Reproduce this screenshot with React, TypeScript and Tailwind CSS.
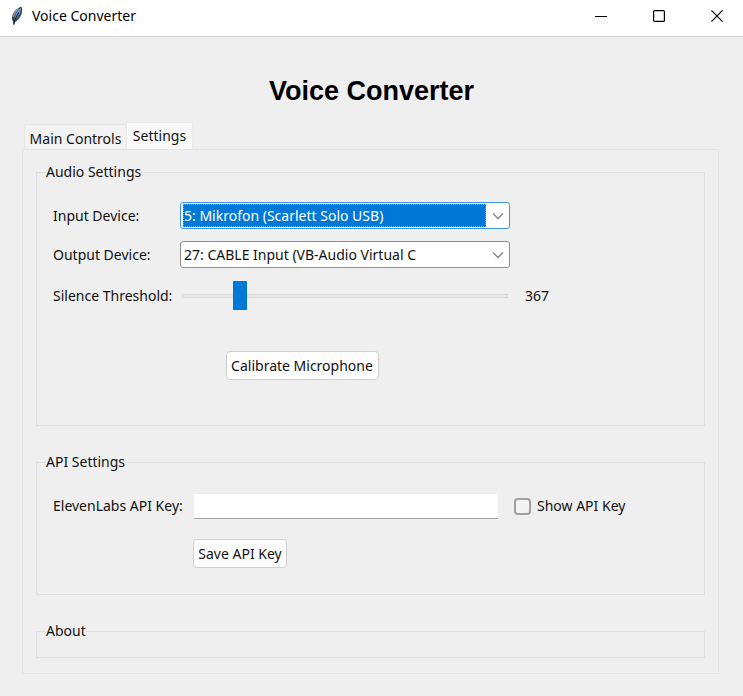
import { useState } from "react";
import type { ReactNode } from "react";

function FeatherIcon() {
  return (
    <svg width="14" height="20" viewBox="0 0 14 20" aria-hidden="true">
      <path d="M11.500.8C8 1.500 4.500 4.500 2.600 9c-.9 2.500-.8 4.800.3 6.500l.7 3.500 1-2.700C8 14.500 10.800 11 11.800 7c.5-2.500.5-4.800-.3-6.200z" fill="#3a434f" />
      <path d="M10.700 2C8.500 3 6.300 6 5.300 9.500c-.5 1.800-.7 3.200-.6 4.500 2.600-1.700 4.700-4.500 5.600-7.700.5-1.700.6-3.200.4-4.300z" fill="#5b97dc" />
      <path d="M8.800 6.500C7 9 5 12.500 3.700 18.500" stroke="#1b2330" strokeWidth="1.200" fill="none" />
      <path d="M8.500 2.800C6 4.600 4.200 7.500 3.500 11" stroke="#9ba8b5" strokeWidth="1.200" fill="none" />
    </svg>
  );
}

function TitleBar() {
  const button = "flex h-8 w-[58px] items-center justify-center pl-[5px]";
  return (
    <header className="flex h-[37px] items-start border-b border-[#d6d6d6] bg-white pl-[10px]">
      <div className="flex h-8 flex-1 items-center gap-2">
        <FeatherIcon />
        <span className="leading-5 text-black">Voice Converter</span>
      </div>
      <button type="button" aria-label="Minimize" className={button}>
        <svg width="12" height="12" viewBox="0 0 12 12" aria-hidden="true">
          <path d="M0 6.500h12" stroke="#000" />
        </svg>
      </button>
      <button type="button" aria-label="Maximize" className={button}>
        <svg width="12" height="12" viewBox="0 0 12 12" fill="none" aria-hidden="true">
          <rect x=".6" y=".6" width="10.800" height="10.800" rx="1" stroke="#000" strokeWidth="1.200" />
        </svg>
      </button>
      <button type="button" aria-label="Close" className={button}>
        <svg width="12" height="12" viewBox="0 0 12 12" aria-hidden="true">
          <path d="M.4.4l11.200 11.200M11.600.4L.4 11.600" stroke="#000" strokeWidth="1.200" />
        </svg>
      </button>
    </header>
  );
}

function Group({ title, className, children }: { title: string; className: string; children?: ReactNode }) {
  return (
    <fieldset className={`min-w-0 border border-[#dfdfdf] ${className}`}>
      <legend className="ml-[9px] h-5 leading-5">{title}</legend>
      {children}
    </fieldset>
  );
}

function Combo({ id, options, active }: { id: string; options: string[]; active?: boolean }) {
  const frame = active ? "border-[#3d97e0]" : "border-[#8f8f8f]";
  const field = active
    ? "border-dotted border-[#d98a4a] bg-[#0078d7] text-white"
    : "border-transparent bg-white text-[#111]";
  return (
    <div className={`flex h-[27px] items-center rounded-[3px] border bg-white py-px pr-px pl-[2px] ${frame}`}>
      <select id={id} className={`h-[23px] min-w-0 flex-1 appearance-none border leading-5 outline-none ${field}`}>
        {options.map((option) => (
          <option key={option}>{option}</option>
        ))}
      </select>
      <svg className="mr-1 ml-[6px]" width="12" height="12" viewBox="0 0 12 12" fill="none" aria-hidden="true">
        <path d="M1 3.500l5 5 5-5" stroke="#858585" strokeWidth="1.400" />
      </svg>
    </div>
  );
}

function PushButton({ className, children }: { className: string; children: ReactNode }) {
  return (
    <button
      type="button"
      className={`flex h-[29px] items-center justify-center rounded-[4px] border border-[#d0d0d0] bg-[#fdfdfd] leading-5 whitespace-nowrap ${className}`}
    >
      {children}
    </button>
  );
}

export default function App() {
  const [threshold, setThreshold] = useState(367);
  const [apiKey, setApiKey] = useState("");
  const [showKey, setShowKey] = useState(false);

  return (
    <div className="min-h-screen bg-[#efefef] font-['Noto_Sans','Open_Sans',sans-serif] text-[14px] text-[#111]">
      <TitleBar />
      <main className="px-[22px] pt-[38px] pb-[22px]">
        <h1 className="text-center font-['Liberation_Sans',Arial,sans-serif] text-[27px] leading-8 font-bold text-black">
          Voice Converter
        </h1>
        <div role="tablist" className="mt-[15px] flex items-end pl-[2px]">
          <button
            type="button"
            role="tab"
            aria-selected="false"
            className="h-[25px] w-[102px] border border-r-0 border-b-0 border-[#e6e6e6] bg-[#f2f2f2] pt-[3px] leading-5 whitespace-nowrap"
          >
            Main Controls
          </button>
          <button
            type="button"
            role="tab"
            aria-selected="true"
            className="h-[27px] w-[67px] border border-b-0 border-[#e9e9e9] bg-[#f9f9f9] leading-5"
          >
            Settings
          </button>
        </div>
        <section role="tabpanel" className="mr-[2px] flex flex-col gap-[26px] border border-[#e5e5e5] px-[13px] pt-3 pb-[15px]">
          <Group title="Audio Settings" className="h-[264px]">
            <div className="mt-5 ml-4 grid w-fit grid-cols-[127px_330px_41px] gap-y-3">
              <label htmlFor="input-device" className="self-center leading-5">Input Device:</label>
              <Combo id="input-device" options={["5: Mikrofon (Scarlett Solo USB)"]} active />
              <span />
              <label htmlFor="output-device" className="self-center leading-5">Output Device:</label>
              <Combo id="output-device" options={["27: CABLE Input (VB-Audio Virtual C"]} />
              <span />
              <label htmlFor="threshold" className="self-center leading-5 whitespace-nowrap">Silence Threshold:</label>
              <input
                id="threshold"
                type="range"
                min={50}
                max={2000}
                value={threshold}
                onChange={(e) => setThreshold(Number(e.target.value))}
                className="mx-[2px] h-[31px] appearance-none bg-transparent [&::-webkit-slider-runnable-track]:h-1 [&::-webkit-slider-runnable-track]:border [&::-webkit-slider-runnable-track]:border-[#dadada] [&::-webkit-slider-runnable-track]:bg-[#e7eaea] [&::-webkit-slider-thumb]:-mt-[14px] [&::-webkit-slider-thumb]:h-[29px] [&::-webkit-slider-thumb]:w-[14px] [&::-webkit-slider-thumb]:appearance-none [&::-webkit-slider-thumb]:bg-[#0078d7]"
              />
              <output htmlFor="threshold" className="self-center pl-[15px] leading-5">{threshold}</output>
              <PushButton className="col-span-3 mt-7 w-[153px] justify-self-center">Calibrate Microphone</PushButton>
            </div>
          </Group>
          <Group title="API Settings" className="h-[143px]">
            <div className="mt-[21px] ml-4 grid w-fit grid-cols-[140px_306px_auto] items-center gap-y-5">
              <label htmlFor="api-key" className="leading-5 whitespace-nowrap">ElevenLabs API Key:</label>
              <input
                id="api-key"
                type={showKey ? "text" : "password"}
                value={apiKey}
                onChange={(e) => setApiKey(e.target.value)}
                className="h-[26px] w-full rounded-[2px] border border-[#ececec] border-b-[#a0a0a0] bg-white px-1 outline-none"
              />
              <label className="flex items-center gap-[6px] pl-[15px] leading-5">
                <input
                  type="checkbox"
                  checked={showKey}
                  onChange={(e) => setShowKey(e.target.checked)}
                  className="size-[17px] appearance-none rounded-[4px] border-2 border-[#a0a0a0] bg-[#f3f3f3] checked:border-[#0078d7] checked:bg-[#0078d7]"
                />
                Show API Key
              </label>
              <PushButton className="col-start-2 w-[94px] justify-self-start">Save API Key</PushButton>
            </div>
          </Group>
          <Group title="About" className="h-[37px]" />
        </section>
      </main>
    </div>
  );
}
